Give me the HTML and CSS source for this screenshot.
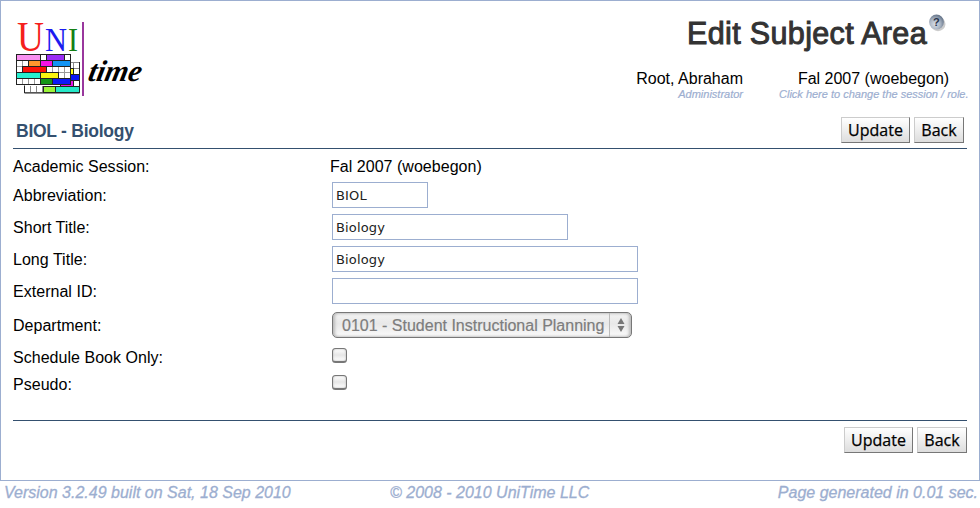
FILE: index.html
```html
<!DOCTYPE html>
<html lang="en">
<head>
<meta charset="utf-8">
<title>Edit Subject Area</title>
<link rel="stylesheet" href="styles.css">
</head>
<body>
<div class="frame">
  <header class="header">
    <svg class="logo" width="128" height="76" viewBox="0 0 128 76" role="img" aria-label="UniTime">
      <g class="logo-uni">
        <text x="2" y="29" font-size="42" textLength="27" lengthAdjust="spacingAndGlyphs" fill="#f5201c">U</text>
        <text x="30" y="29" font-size="33" textLength="22" lengthAdjust="spacingAndGlyphs" fill="#1c1cf0">N</text>
        <text x="53" y="29" font-size="33" textLength="10" lengthAdjust="spacingAndGlyphs" fill="#158015">I</text>
      </g>
      <g stroke="#222" stroke-width="1">
        <g stroke="#888">
          <rect x="9.500" y="40.500" width="55" height="30" fill="#fff"/>
          <path d="M15.500 64v6M21.500 64v6M27.500 64v6M58.500 41v29M55 46.500h9M55 58.500h9" fill="none"/>
        </g>
        <path d="M64.500 40v31H9.500v-7" fill="none"/>
        <rect x="52.500" y="46.500" width="6" height="6" fill="#ffff12"/>
        <rect x="52.500" y="52.500" width="12" height="6" fill="#0a14f5"/>
        <rect x="45.500" y="58.500" width="13" height="6" fill="#e815e8"/>
        <rect x="28.500" y="64.500" width="12" height="6" fill="#9bf53a"/>
        <rect x="40.500" y="64.500" width="24" height="6" fill="#25e8c8"/>
        <rect x="1.500" y="32.500" width="54" height="30" fill="#fff"/>
        <path stroke="#999" d="M7.500 33v29M13.500 33v29M19.500 33v29M25.500 33v29M31.500 33v29M37.500 33v29M43.500 33v29M49.500 33v29M2 38.500h53M2 44.500h53M2 50.500h53M2 56.500h53" fill="none"/>
        <rect x="1.500" y="32.500" width="24" height="6" fill="#f990f0"/>
        <rect x="31.500" y="32.500" width="18" height="6" fill="#9a2cf5"/>
        <rect x="13.500" y="38.500" width="12" height="6" fill="#ff962d"/>
        <rect x="25.500" y="38.500" width="12" height="6" fill="#f512e5"/>
        <rect x="37.500" y="38.500" width="18" height="6" fill="#1395f5"/>
        <rect x="7.500" y="44.500" width="24" height="6" fill="#fa1208"/>
        <rect x="1.500" y="50.500" width="24" height="6" fill="#25f0d0"/>
        <rect x="25.500" y="50.500" width="18" height="6" fill="#faf510"/>
        <rect x="25.500" y="56.500" width="12" height="6" fill="#159615"/>
        <rect x="37.500" y="56.500" width="18" height="6" fill="#0c18f8"/>
        <rect x="1.500" y="32.500" width="54" height="30" fill="none"/>
      </g>
      <rect x="67" y="0" width="2" height="74" fill="#99379d"/>
      <text class="logo-time" transform="translate(72 59) skewX(-12)" textLength="53" lengthAdjust="spacingAndGlyphs">time</text>
    </svg>
    <div class="heading">
      <h1 class="title">Edit Subject Area<svg class="help" width="18" height="18" viewBox="0 0 18 18">
        <defs><radialGradient id="ball" cx=".4" cy=".65" r=".65"><stop offset="0" stop-color="#d8dfe8"/><stop offset=".55" stop-color="#aab5c3"/><stop offset="1" stop-color="#66758a"/></radialGradient></defs>
        <ellipse cx="10" cy="10" rx="7.500" ry="7.200" fill="#aaa" opacity=".6"/>
        <circle cx="8.500" cy="8" r="7.400" fill="url(#ball)"/>
        <text x="8.400" y="12" text-anchor="middle" class="help-mark">?</text>
      </svg></h1>
      <div class="who">
        <div class="user"><div class="main-text user-name">Root, Abraham</div><div class="hint">Administrator</div></div>
        <div class="session"><div class="main-text">Fal 2007 (woebegon)</div><div class="hint">Click here to change the session / role.</div></div>
      </div>
    </div>
  </header>
  <div class="section-bar">
    <h2 class="section-title">BIOL - Biology</h2>
    <div class="buttons"><button class="button update">Update</button><button class="button back">Back</button></div>
  </div>
  <form class="form">
    <label>Academic Session:</label><div class="value">Fal 2007 (woebegon)</div>
    <label>Abbreviation:</label><input class="field short" type="text" value="BIOL">
    <label>Short Title:</label><input class="field medium" type="text" value="Biology">
    <label>Long Title:</label><input class="field long" type="text" value="Biology">
    <label>External ID:</label><input class="field long" type="text">
    <label>Department:</label>
    <div class="select"><span class="select-text">0101 - Student Instructional Planning</span><span class="select-arrows"><svg width="8" height="16" viewBox="0 0 8 16"><path d="M4 1l3.500 6h-7zM4 15l3.500-6h-7z" fill="#777"/></svg></span></div>
    <label>Schedule Book Only:</label><input class="check" type="checkbox">
    <label class="last">Pseudo:</label><input class="check" type="checkbox">
  </form>
  <div class="buttons bottom"><button class="button update">Update</button><button class="button back">Back</button></div>
</div>
<footer class="footer"><span class="version">Version 3.2.49 built on Sat, 18 Sep 2010</span><span class="copyright">© 2008 - 2010 UniTime LLC</span><span class="timing">Page generated in 0.01 sec.</span></footer>
</body>
</html>
```

FILE: styles.css
```css
* { box-sizing: border-box; }
body { margin: 0; background: #fff; color: #000; font: 16px/20px "Liberation Sans", Arial, sans-serif; }
.frame { height: 481px; border: 1px solid #9caed0; padding: 0 12px; }
.header { height: 115px; display: flex; justify-content: space-between; }
.logo { display: block; margin: 21px 0 0 2px; overflow: visible; }
.logo-uni { font-family: "Liberation Serif", serif; }
.logo-time { font: italic bold 30px "Liberation Serif", serif; }
.heading { padding-top: 13px; }
.title { margin: 0; height: 55px; font-size: 30.5px; line-height: 38px; font-weight: normal; letter-spacing: .35px; color: #333; -webkit-text-stroke: 1px #333; text-align: right; padding-right: 22px; white-space: nowrap; }
.help { vertical-align: top; margin-left: 1px; margin-right: -1px; -webkit-text-stroke: 0; }
.help-mark { font: bold 11px "Liberation Sans", sans-serif; fill: #27344b; letter-spacing: 0; }
.who { display: flex; justify-content: flex-end; gap: 36px; margin-right: -1px; }
.main-text { line-height: 20px; }
.session { text-align: center; width: 189px; }
.user { text-align: right; }
.hint { font-size: 11px; line-height: 11px; font-style: italic; color: #9caed0; -webkit-text-stroke: .2px #9caed0; white-space: nowrap; }
.section-bar { height: 33px; border-bottom: 1px solid #34506f; display: flex; justify-content: space-between; align-items: flex-start; padding: 1px 3px 0; }
.section-title { margin: 4px 0 0; font-size: 17.5px; letter-spacing: -.25px; line-height: 20px; color: #34506f; }
.buttons { display: flex; gap: 4px; }
.button { height: 26px; padding: 0; border: 1px solid #ccc; border-right: 1px solid #777; border-bottom: 1px solid #777; background: linear-gradient(#fff, #ddd); font: 16px/22px "Open Sans", sans-serif; -webkit-text-stroke: .25px #000; color: #000; }
.update { width: 69px; }
.back { width: 50px; }
.form { display: grid; grid-template-columns: 319px 1fr; grid-template-rows: 26px 32px 32px 32px 32px 36px 28px 27px; align-items: center; height: 272px; padding-top: 4px; align-content: start; border-bottom: 1px solid #34506f; }
.form label, .value { padding-top: 2px; letter-spacing: .03px; }
.form .last { padding-top: 0; }
.value { margin-left: -2px; }
.field { height: 26px; border: 1px solid #9caed0; padding: 1px 3px; margin: 0; font: 13px "DejaVu Sans", sans-serif; letter-spacing: .15px; color: #222; background: #fff; }
.short { width: 96px; }
.medium { width: 236px; }
.long { width: 306px; }
.select { width: 300px; height: 26px; border: 1px solid #777; border-radius: 5px; display: flex; color: #7d7d7d; background: linear-gradient(#f3f3f3, #e8e8e8 45%, #fbfbfb); box-shadow: inset 2px 0 3px #bbb, inset -2px 0 3px #bbb; }
.select-text { width: 277px; padding-left: 9px; line-height: 25px; border-right: 1px solid #bbb; white-space: nowrap; -webkit-text-stroke: .2px #7d7d7d; }
.select-arrows { flex: 1; display: flex; align-items: center; justify-content: center; }
.check { appearance: none; width: 15px; height: 15px; margin: 0 0 4px; border: 1px solid #777; border-bottom-width: 2px; border-radius: 3.500px; background: linear-gradient(#fff, #e6e6e6 50%, #fff); box-shadow: inset 0 0 2px #aaa; }
.bottom { justify-content: flex-end; margin-top: 6px; }
.footer { display: flex; height: 27px; padding: 0 2px 0 4px; font-size: 16px; line-height: 24px; font-style: italic; color: #9caed0; -webkit-text-stroke: .3px #9caed0; white-space: nowrap; }
.version { width: 386px; }
.copyright { flex: 1; }
```
